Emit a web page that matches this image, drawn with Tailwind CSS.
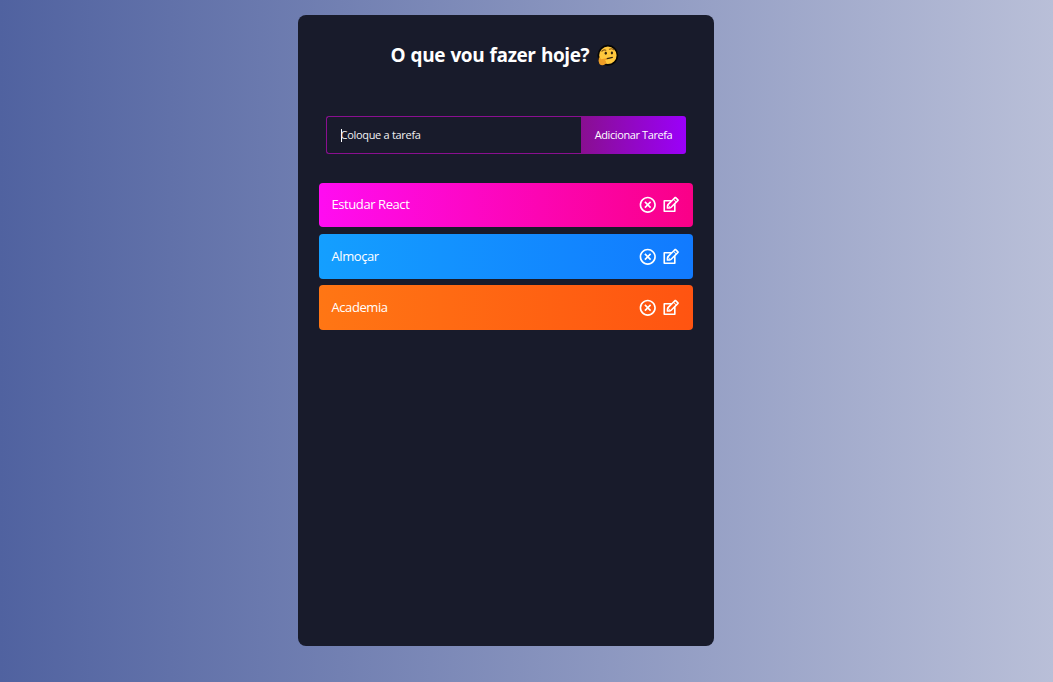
<!DOCTYPE html>
<html lang="pt-BR">
<head>
<meta charset="utf-8">
<meta name="viewport" content="width=device-width, initial-scale=1">
<title>Tarefas</title>
<script src="https://cdn.jsdelivr.net/npm/@tailwindcss/browser@4"></script>
</head>
<body class="h-[682px] overflow-hidden bg-linear-to-r/srgb from-[#5062a0] to-[#b9bfd8] pt-[15px] pl-[298px] font-['Trebuchet_MS','Open_Sans',sans-serif] text-white">
<svg class="hidden">
  <symbol id="close" viewBox="0 0 24 24"><path d="M12 22C6.477 22 2 17.523 2 12S6.477 2 12 2s10 4.477 10 10-4.477 10-10 10zm0-2a8 8 0 1 0 0-16 8 8 0 0 0 0 16zm0-9.414l2.828-2.829 1.415 1.415L13.414 12l2.829 2.828-1.415 1.415L12 13.414l-2.828 2.829-1.415-1.415L10.586 12 7.757 9.172l1.415-1.415L12 10.586z"/></symbol>
  <symbol id="edit" viewBox="0 0 24 24"><path d="M21.561 5.318l-2.879-2.879c-.293-.293-.677-.439-1.061-.439-.385 0-.768.146-1.061.439l-3.56 3.561h-9c-.552 0-1 .447-1 1v13c0 .553.448 1 1 1h13c.552 0 1-.447 1-1v-9l3.561-3.561c.293-.293.439-.677.439-1.061s-.146-.767-.439-1.061zm-10.061 9.354l-2.172-2.172 6.293-6.293 2.172 2.172-6.293 6.293zm-2.561-1.339l1.756 1.728-1.695-.061-.061-1.667zm7.061 5.667h-11v-11h6l-3.18 3.18c-.293.293-.478.812-.629 1.289-.16.5-.191 1.056-.191 1.47v3.061h3.061c.414 0 1.108-.1 1.571-.29.464-.19.896-.347 1.188-.64l3.18-3.07v6zm2.5-11.328l-2.172-2.172 1.293-1.293 2.171 2.172-1.292 1.293z"/></symbol>
</svg>
<main class="flex h-[631px] w-[416px] flex-col rounded-lg bg-[#181b2b] pt-[26px]">
  <h1 class="flex h-7 items-center pl-[92.5px] text-[19px] font-bold tracking-[-0.4px] whitespace-nowrap [word-spacing:0.8px]">
    <span class="w-[205.5px]">O que vou fazer hoje?</span>
    <svg class="size-[23px]" viewBox="0 0 24 24" fill="none" stroke-linecap="round" stroke-linejoin="round">
      <circle cx="12.4" cy="11.8" r="10" fill="#ffc83d" stroke="#050505" stroke-width="1.8"/>
      <path d="M6.2 7.5Q8 5.3 10.2 6.5M14 5.5Q16.5 4.2 18.4 6" stroke="#8a5a18" stroke-width="1.2"/>
      <ellipse cx="10.2" cy="9.6" rx="1.2" ry="1.5" fill="#33250e"/><ellipse cx="16.6" cy="9.4" rx="1.2" ry="1.5" fill="#33250e"/>
      <path d="M11.4 15.2Q14 14.8 17 14" stroke="#33250e" stroke-width="1.4"/>
      <path d="M3 14.2Q4.5 13.4 5.2 16L11.2 14.8Q12.5 15.4 11 16.4L9.3 17.2Q11.8 18.8 9.6 21.2Q6 23.4 3.6 20.8Q2 18.5 3 14.2Z" fill="#ef9e26"/>
    </svg>
  </h1>
  <form class="mt-[47px] ml-7 flex h-[38px] w-[360px]">
    <div class="flex w-[255px] items-center rounded-l-[3px] border border-r-0 border-[#8a0f90] pl-[14px] text-[11px]">
      <span class="h-[13px] w-px bg-white"></span><span class="-ml-[1.5px] font-medium tracking-[-0.3px] whitespace-nowrap text-[#f0f0f2]">Coloque a tarefa</span>
    </div>
    <button type="button" class="w-[105px] rounded-r-[3px] bg-linear-to-r/srgb from-[#890f90] to-[#9b00fa] text-[11px] font-medium tracking-[-0.4px] whitespace-nowrap">Adicionar Tarefa</button>
  </form>
  <ul class="mt-[29px] ml-[21px] flex w-[374px] flex-col text-[13px] font-medium tracking-[-0.42px]">
    <li class="flex h-11 items-center justify-between rounded-[4px] bg-linear-to-r/srgb from-[#ff0cf1] to-[#fa0087] pr-[13px] pl-[12.5px]">
      <span class="-mt-px">Estudar React</span>
      <span class="flex gap-[3.5px] fill-white"><svg class="size-[19.5px]"><use href="#close"/></svg><svg class="size-[19.5px]"><use href="#edit"/></svg></span>
    </li>
    <li class="mt-[7px] flex h-[45px] items-center justify-between rounded-[4px] bg-linear-to-r/srgb from-[#149fff] to-[#117aff] pr-[13px] pl-[12.5px]">
      <span>Almoçar</span>
      <span class="flex gap-[3.5px] fill-white"><svg class="size-[19.5px]"><use href="#close"/></svg><svg class="size-[19.5px]"><use href="#edit"/></svg></span>
    </li>
    <li class="mt-[6px] flex h-[45px] items-center justify-between rounded-[4px] bg-linear-to-r/srgb from-[#ff7614] to-[#ff5411] pr-[13px] pl-[12.5px]">
      <span>Academia</span>
      <span class="flex gap-[3.5px] fill-white"><svg class="size-[19.5px]"><use href="#close"/></svg><svg class="size-[19.5px]"><use href="#edit"/></svg></span>
    </li>
  </ul>
</main>
</body>
</html>
